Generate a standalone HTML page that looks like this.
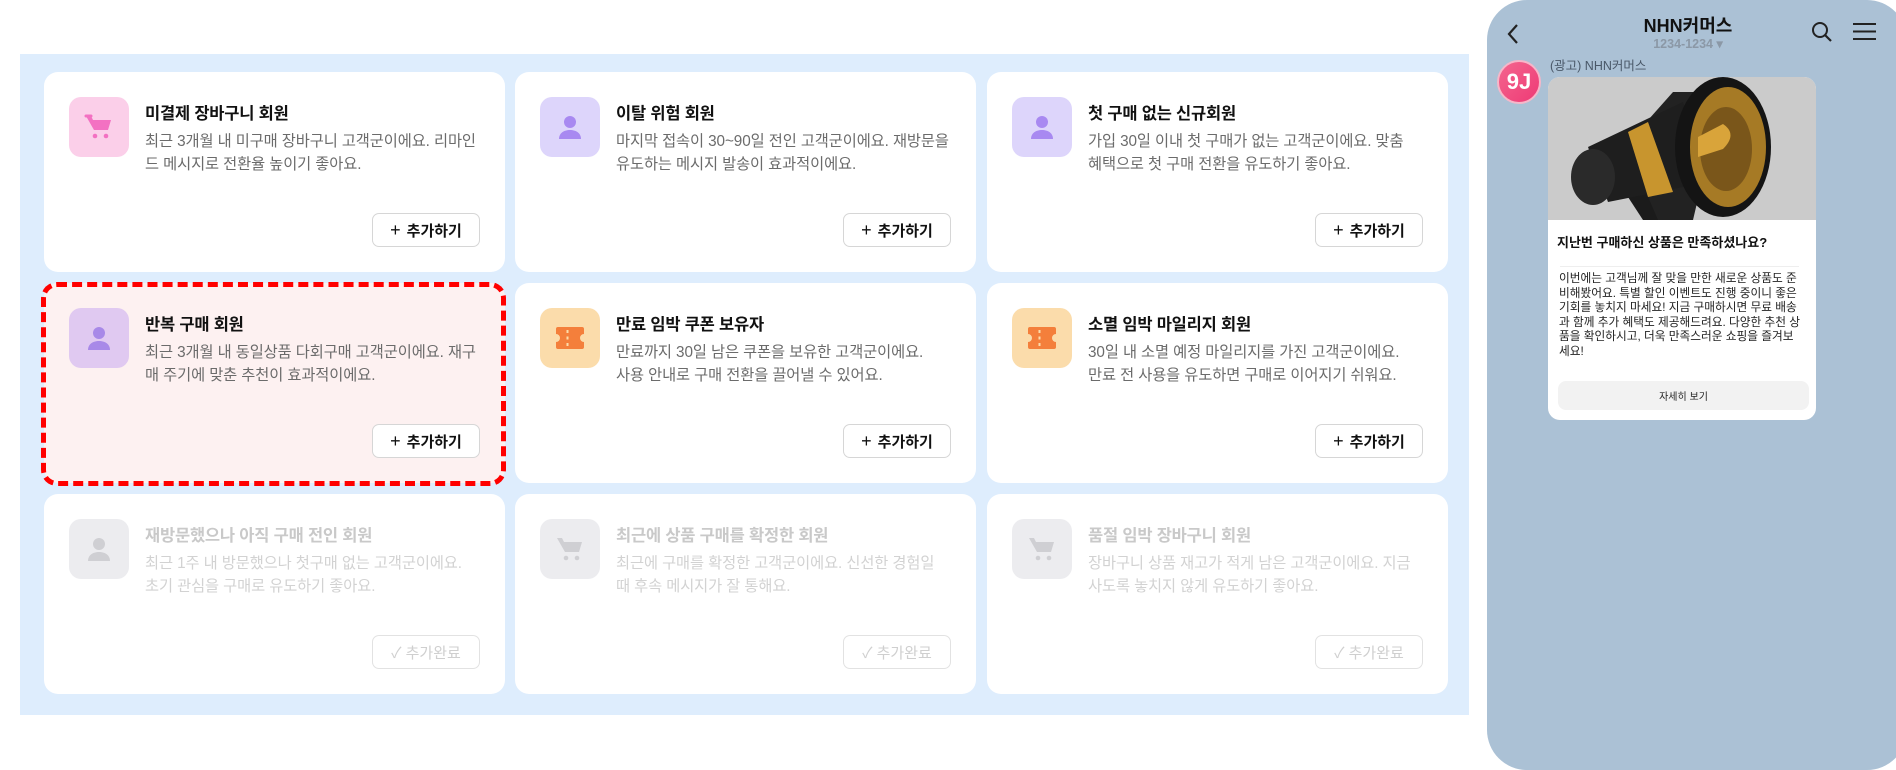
<!DOCTYPE html>
<html><head><meta charset="utf-8"><style>
*{box-sizing:border-box;margin:0;padding:0}
body{width:1896px;height:770px;background:#fff;position:relative;overflow:hidden;font-family:"Liberation Sans","Noto Sans CJK KR",sans-serif}
.panel{position:absolute;left:20px;top:54px;width:1449px;height:661px;background:#deedfd}
.card{position:absolute;width:461px;height:200px;background:#fff;border-radius:14px}
.ic{position:absolute;left:25px;top:25px;width:60px;height:60px;border-radius:12px;display:flex;align-items:center;justify-content:center}
.t{position:absolute;left:101px;top:28px;font-size:16.5px;font-weight:bold;color:#111;letter-spacing:-0.2px}
.d{position:absolute;left:101px;top:58px;width:333px;font-size:15.3px;line-height:23px;color:#6b6b6b;letter-spacing:-0.1px}
.b{position:absolute;right:25px;bottom:25px;width:108px;height:34px;border:1.5px solid #d6d6d6;border-radius:7px;background:#fff;font-size:15px;font-weight:bold;color:#111;display:flex;align-items:center;justify-content:center;gap:6px}
.dis .t{color:#c9c9c9}.dis .d{color:#d2d2d2}.dis .b{color:#cfcfcf;border-color:#e2e2e2;font-weight:normal}
.dis .ic{background:#ececef}
.hl{background:#fdf1f1;outline:none}
.hl::after{content:"";position:absolute;left:-3px;top:-1px;right:-1px;bottom:-3px;border:5px dashed #f00;border-radius:16px}
.phone{position:absolute;left:1487px;top:0;width:420px;height:770px;background:#abc1d5;border-radius:40px}
</style></head><body>
<div class="panel"></div>

<div class="card" style="left:44px;top:72px">
 <div class="ic" style="background:#fbcfe9"><svg width="30" height="28" viewBox="0 0 30 28"><path d="M2 3h5l2 4h18l-3 10H10z" fill="#f371c2"/><path d="M2 3h5" stroke="#f371c2" stroke-width="3" stroke-linecap="round"/><circle cx="11" cy="23" r="2.3" fill="#f371c2"/><circle cx="22" cy="23" r="2.3" fill="#f371c2"/></svg></div>
 <div class="t">미결제 장바구니 회원</div>
 <div class="d">최근 3개월 내 미구매 장바구니 고객군이에요. 리마인드 메시지로 전환율 높이기 좋아요.</div>
 <div class="b"><span style="font-size:18px;font-weight:normal">+</span>추가하기</div>
</div>
<div class="card" style="left:515px;top:72px">
 <div class="ic" style="background:#ddd5fb"><svg width="28" height="28" viewBox="0 0 28 28"><circle cx="14" cy="9" r="6" fill="#a889f1"/><path d="M3 26c0-6 5-9 11-9s11 3 11 9z" fill="#a889f1"/></svg></div>
 <div class="t">이탈 위험 회원</div>
 <div class="d">마지막 접속이 30~90일 전인 고객군이에요. 재방문을 유도하는 메시지 발송이 효과적이에요.</div>
 <div class="b"><span style="font-size:18px;font-weight:normal">+</span>추가하기</div>
</div>
<div class="card" style="left:987px;top:72px">
 <div class="ic" style="background:#ddd5fb"><svg width="28" height="28" viewBox="0 0 28 28"><circle cx="14" cy="9" r="6" fill="#a889f1"/><path d="M3 26c0-6 5-9 11-9s11 3 11 9z" fill="#a889f1"/></svg></div>
 <div class="t">첫 구매 없는 신규회원</div>
 <div class="d">가입 30일 이내 첫 구매가 없는 고객군이에요. 맞춤 혜택으로 첫 구매 전환을 유도하기 좋아요.</div>
 <div class="b"><span style="font-size:18px;font-weight:normal">+</span>추가하기</div>
</div>

<div class="card hl" style="left:44px;top:283px">
 <div class="ic" style="background:#e0c9f1"><svg width="28" height="28" viewBox="0 0 28 28"><circle cx="14" cy="9" r="6" fill="#a889e8"/><path d="M3 26c0-6 5-9 11-9s11 3 11 9z" fill="#a889e8"/></svg></div>
 <div class="t">반복 구매 회원</div>
 <div class="d">최근 3개월 내 동일상품 다회구매 고객군이에요. 재구매 주기에 맞춘 추천이 효과적이에요.</div>
 <div class="b"><span style="font-size:18px;font-weight:normal">+</span>추가하기</div>
</div>
<div class="card" style="left:515px;top:283px">
 <div class="ic" style="background:#fbdcab"><svg width="30" height="24" viewBox="0 0 30 24"><path d="M3 1h24a2 2 0 0 1 2 2v5a4 4 0 0 0 0 8v5a2 2 0 0 1-2 2H3a2 2 0 0 1-2-2v-5a4 4 0 0 0 0-8V3a2 2 0 0 1 2-2z" fill="#f47f3b"/><rect x="11.5" y="4" width="2" height="3" fill="#fbdcab"/><rect x="11.5" y="10.5" width="2" height="3" fill="#fbdcab"/><rect x="11.5" y="17" width="2" height="3" fill="#fbdcab"/></svg></div>
 <div class="t">만료 임박 쿠폰 보유자</div>
 <div class="d">만료까지 30일 남은 쿠폰을 보유한 고객군이에요.<br>사용 안내로 구매 전환을 끌어낼 수 있어요.</div>
 <div class="b"><span style="font-size:18px;font-weight:normal">+</span>추가하기</div>
</div>
<div class="card" style="left:987px;top:283px">
 <div class="ic" style="background:#fbdcab"><svg width="30" height="24" viewBox="0 0 30 24"><path d="M3 1h24a2 2 0 0 1 2 2v5a4 4 0 0 0 0 8v5a2 2 0 0 1-2 2H3a2 2 0 0 1-2-2v-5a4 4 0 0 0 0-8V3a2 2 0 0 1 2-2z" fill="#f47f3b"/><rect x="11.5" y="4" width="2" height="3" fill="#fbdcab"/><rect x="11.5" y="10.5" width="2" height="3" fill="#fbdcab"/><rect x="11.5" y="17" width="2" height="3" fill="#fbdcab"/></svg></div>
 <div class="t">소멸 임박 마일리지 회원</div>
 <div class="d">30일 내 소멸 예정 마일리지를 가진 고객군이에요.<br>만료 전 사용을 유도하면 구매로 이어지기 쉬워요.</div>
 <div class="b"><span style="font-size:18px;font-weight:normal">+</span>추가하기</div>
</div>

<div class="card dis" style="left:44px;top:494px">
 <div class="ic"><svg width="28" height="28" viewBox="0 0 28 28"><circle cx="14" cy="9" r="6" fill="#cfcfd3"/><path d="M3 26c0-6 5-9 11-9s11 3 11 9z" fill="#cfcfd3"/></svg></div>
 <div class="t">재방문했으나 아직 구매 전인 회원</div>
 <div class="d">최근 1주 내 방문했으나 첫구매 없는 고객군이에요.<br>초기 관심을 구매로 유도하기 좋아요.</div>
 <div class="b">✓ 추가완료</div>
</div>
<div class="card dis" style="left:515px;top:494px">
 <div class="ic"><svg width="30" height="28" viewBox="0 0 30 28"><path d="M2 3h5l2 4h18l-3 10H10z" fill="#cfcfd3"/><circle cx="11" cy="23" r="2.3" fill="#cfcfd3"/><circle cx="22" cy="23" r="2.3" fill="#cfcfd3"/></svg></div>
 <div class="t">최근에 상품 구매를 확정한 회원</div>
 <div class="d">최근에 구매를 확정한 고객군이에요. 신선한 경험일<br>때 후속 메시지가 잘 통해요.</div>
 <div class="b">✓ 추가완료</div>
</div>
<div class="card dis" style="left:987px;top:494px">
 <div class="ic"><svg width="30" height="28" viewBox="0 0 30 28"><path d="M2 3h5l2 4h18l-3 10H10z" fill="#cfcfd3"/><circle cx="11" cy="23" r="2.3" fill="#cfcfd3"/><circle cx="22" cy="23" r="2.3" fill="#cfcfd3"/></svg></div>
 <div class="t">품절 임박 장바구니 회원</div>
 <div class="d">장바구니 상품 재고가 적게 남은 고객군이에요. 지금<br>사도록 놓치지 않게 유도하기 좋아요.</div>
 <div class="b">✓ 추가완료</div>
</div>

<div class="phone">
 <svg style="position:absolute;left:19px;top:23px" width="14" height="22" viewBox="0 0 14 22"><path d="M11 2L3 11l8 9" stroke="#222" stroke-width="2.2" fill="none"/></svg>
 <div style="position:absolute;left:0;width:402px;top:12px;text-align:center;font-size:18px;font-weight:bold;color:#111">NHN커머스</div>
 <div style="position:absolute;left:0;width:402px;top:36px;text-align:center;font-size:12.5px;font-weight:bold;color:#8b98a6">1234-1234 ▾</div>
 <svg style="position:absolute;left:324px;top:21px" width="22" height="22" viewBox="0 0 22 22"><circle cx="9" cy="9" r="7" stroke="#222" stroke-width="2" fill="none"/><path d="M14 14l6 6" stroke="#222" stroke-width="2.2"/></svg>
 <svg style="position:absolute;left:366px;top:22px" width="23" height="19" viewBox="0 0 23 19"><path d="M0 2h23M0 9.5h23M0 17h23" stroke="#222" stroke-width="2"/></svg>
 <div style="position:absolute;left:10px;top:60px;width:44px;height:44px;border-radius:50%;background:linear-gradient(135deg,#f4668e,#ee3a76);border:2px solid #f6b7c9;color:#fff;font-weight:bold;font-size:22px;display:flex;align-items:center;justify-content:center">9J</div>
 <div style="position:absolute;left:63px;top:55px;font-size:12.5px;color:#4a5868">(광고) NHN커머스</div>
 <div style="position:absolute;left:61px;top:77px;width:268px;height:343px;background:#fff;border-radius:12px;overflow:hidden">
  <div style="height:143px;background:#cbcbcb;position:relative">
   <svg width="268" height="143" viewBox="0 0 268 143">
    <path d="M85 60l40-45 50 0 -30 128 -50 0z" fill="#222"/>
    <path d="M80 120l15 23h15l-12-28z" fill="#1b1b1b"/>
    <path d="M40 70 L135 25 L160 105 L60 125 Z" fill="#1e1e1e"/>
    <ellipse cx="45" cy="100" rx="22" ry="28" fill="#2a2a2a"/>
    <path d="M80 55 L100 45 L125 115 L100 120 Z" fill="#c8952e"/>
    <ellipse cx="175" cy="70" rx="48" ry="70" fill="#141414"/>
    <ellipse cx="180" cy="70" rx="38" ry="60" fill="#a67a25"/>
    <ellipse cx="178" cy="72" rx="26" ry="42" fill="#7a561a"/>
    <path d="M150 60 l25-13 q15 10 0 25 l-25 8z" fill="#d9a43a"/>
   </svg>
  </div>
  <div style="position:absolute;left:9px;top:155px;font-size:13px;font-weight:bold;color:#111">지난번 구매하신 상품은 만족하셨나요?</div>
  <div style="position:absolute;left:12px;right:17px;top:189px;height:1px;background:#eee"></div>
  <div style="position:absolute;left:11px;right:12px;top:195px;font-size:11.7px;line-height:14.6px;color:#222">이번에는 고객님께 잘 맞을 만한 새로운 상품도 준비해봤어요. 특별 할인 이벤트도 진행 중이니 좋은 기회를 놓치지 마세요! 지금 구매하시면 무료 배송과 함께 추가 혜택도 제공해드려요. 다양한 추천 상품을 확인하시고, 더욱 만족스러운 쇼핑을 즐겨보세요!</div>
  <div style="position:absolute;left:10px;right:7px;top:304px;height:29px;background:#f2f2f2;border-radius:8px;font-size:10px;color:#222;display:flex;align-items:center;justify-content:center">자세히 보기</div>
 </div>
</div>
</body></html>
